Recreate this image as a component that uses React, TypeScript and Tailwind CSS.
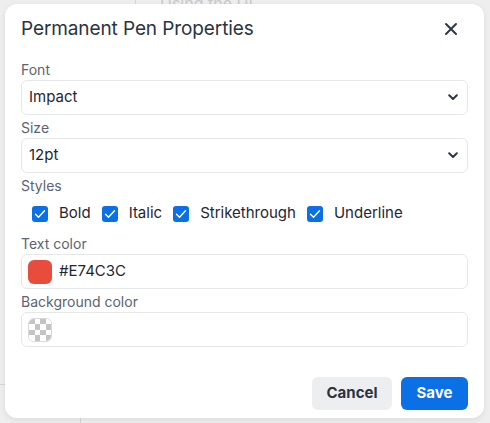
import React from 'react';

const labelCls = "text-[14px] leading-[16px] text-[#5b6472] mb-[2px]";
const boxCls = "h-[35px] w-full flex items-center border border-[#e6e7e9] rounded-[6px] bg-white";

function Chevron() {
  return (
    <svg width="10" height="7" viewBox="0 0 10 7" fill="none">
      <path d="M1.2 1.2 L5 5 L8.8 1.2" stroke="#2d3748" strokeWidth="2" strokeLinecap="round" strokeLinejoin="round" />
    </svg>
  );
}

function Select({ value }: { value: string }) {
  return (
    <div className={`${boxCls} justify-between pl-[7px] pr-[9px] text-[15px] text-[#1f2633]`}>
      <span>{value}</span>
      <Chevron />
    </div>
  );
}

function Check({ label }: { label: string }) {
  return (
    <label className="flex items-center gap-[11px]">
      <span className="w-[16px] h-[16px] rounded-[3px] bg-[#0b6fe6] flex items-center justify-center">
        <svg width="12" height="10" viewBox="0 0 12 10" fill="none">
          <path d="M1.5 5.2 L4.5 8.2 L10.5 1.8" stroke="white" strokeWidth="1.4" strokeLinecap="round" strokeLinejoin="round" />
        </svg>
      </span>
      <span className="text-[15px] text-[#1f2633]">{label}</span>
    </label>
  );
}

function Checker() {
  return (
    <span className="w-[24px] h-[24px] rounded-[6px] overflow-hidden grid grid-cols-4 grid-rows-4 border border-[#d9d9d9]">
      {Array.from({ length: 16 }).map((_, i) => {
        const dark = (Math.floor(i / 4) + (i % 4)) % 2 === 0;
        return <span key={i} className={dark ? 'bg-[#c4c4c4]' : 'bg-white'} />;
      })}
    </span>
  );
}

export default function App() {
  return (
    <div className="relative w-[490px] h-[423px] overflow-hidden bg-[#eeeeee] font-['Inter',sans-serif]">
      {/* page behind the modal */}
      <div className="absolute left-[135px] top-0 h-[20px] w-px bg-[#d6d6d6]" />
      <div className="absolute left-[160px] top-[-9px] text-[16px] text-[#c9c9c9]">Using the UI</div>
      <div className="absolute left-0 top-[384px] h-px w-[20px] bg-[#d6d6d6]" />
      <div className="absolute left-[80px] top-[400px] h-[30px] w-px bg-[#d6d6d6]" />

      <div className="absolute left-[5px] top-[4px] w-[479px] h-[414px] bg-white rounded-[12px] shadow-[0_2px_6px_rgba(0,0,0,0.08)] px-[16px] pt-[10px]">
        <div className="flex items-center justify-between h-[30px]">
          <h2 className="text-[19px] text-[#2a3342] tracking-[-0.1px]">Permanent Pen Properties</h2>
          <svg width="14" height="14" viewBox="0 0 14 14" className="mr-[10px]">
            <path d="M2 2 L12 12 M12 2 L2 12" stroke="#2d3748" strokeWidth="2" strokeLinecap="round" />
          </svg>
        </div>

        <div className="mt-[18px] flex flex-col gap-[5px]">
          <div>
            <div className={labelCls}>Font</div>
            <Select value="Impact" />
          </div>
          <div>
            <div className={labelCls}>Size</div>
            <Select value="12pt" />
          </div>
          <div>
            <div className={labelCls}>Styles</div>
            <div className="flex items-center gap-[11px] pl-[11px] h-[35px]">
              <Check label="Bold" />
              <Check label="Italic" />
              <Check label="Strikethrough" />
              <Check label="Underline" />
            </div>
          </div>
          <div>
            <div className={labelCls}>Text color</div>
            <div className={`${boxCls} pl-[6px] gap-[7px]`}>
              <span className="w-[24px] h-[24px] rounded-[6px] bg-[#e74c3c]" />
              <span className="text-[15px] text-[#1f2633]">#E74C3C</span>
            </div>
          </div>
          <div>
            <div className={labelCls}>Background color</div>
            <div className={`${boxCls} pl-[6px]`}>
              <Checker />
            </div>
          </div>
        </div>

        <div className="mt-[30px] flex justify-end gap-[9px]">
          <button className="h-[33px] w-[80px] rounded-[6px] bg-[#edeef0] text-[15px] font-bold text-[#2a3342]">Cancel</button>
          <button className="h-[33px] w-[67px] rounded-[6px] bg-[#0b6fe6] text-[15px] font-bold text-white">Save</button>
        </div>
      </div>
    </div>
  );
}
